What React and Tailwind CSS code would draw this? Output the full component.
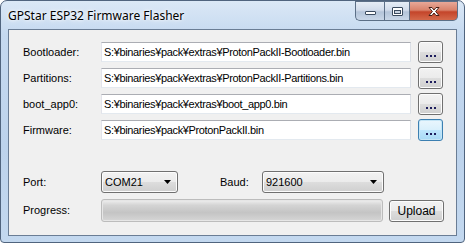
import { ChevronDown } from "lucide-react";

const font = { fontFamily: '"Liberation Sans", Arial, sans-serif' };

function Ellipsis({ focused }) {
  return (
    <button
      className={
        "w-[25px] h-[22px] rounded-[3px] border flex items-end justify-center pb-[5px] " +
        (focused
          ? "border-[#3c7fb1] bg-[linear-gradient(#eaf6fd_0%,#d9f0fc_50%,#bee6fd_50%,#a7d9f5_100%)] shadow-[inset_0_0_0_1px_#c4e5f6]"
          : "border-[#707070] bg-[linear-gradient(#f2f2f2_0%,#ebebeb_50%,#dddddd_50%,#cfcfcf_100%)] shadow-[inset_0_0_0_1px_#fcfcfc]")
      }
    >
      <span className="flex gap-[2px]">
        <i className="block w-[2px] h-[2px] bg-[#1c1c5c]" />
        <i className="block w-[2px] h-[2px] bg-[#1c1c5c]" />
        <i className="block w-[2px] h-[2px] bg-[#1c1c5c]" />
      </span>
    </button>
  );
}

function FileRow({ label, path, focused }) {
  return (
    <div className="flex items-center h-[22px]">
      <span className="w-[78px] text-[11px] text-black">{label}</span>
      <div className="w-[310px] h-[20px] border border-[#abadb3] border-t-[#abadb3] border-l-[#e2e3ea] border-r-[#dbdfe6] border-b-[#e3e9ef] bg-white flex items-center pl-[2px] text-[11px] tracking-[-0.35px] text-black">
        {path}
      </div>
      <div className="ml-[7px]">
        <Ellipsis focused={focused} />
      </div>
    </div>
  );
}

function Combo({ value, width }) {
  return (
    <div
      className={
        "h-[22px] rounded-[3px] border border-[#707070] bg-[linear-gradient(#f2f2f2_0%,#ebebeb_50%,#dddddd_50%,#cfcfcf_100%)] shadow-[inset_0_0_0_1px_#fcfcfc] flex items-center justify-between pl-[3px] pr-[6px] text-[11px] text-black " +
        width
      }
    >
      <span>{value}</span>
      <svg width="7" height="4" viewBox="0 0 7 4">
        <path d="M0 0h7L3.5 4z" fill="#000" />
      </svg>
    </div>
  );
}

function TitleButtons() {
  return (
    <div className="flex h-[20px] mr-[6px]">
      <div className="w-[29px] h-[20px] border border-[#5c6f87] border-r-0 rounded-bl-[5px] bg-[linear-gradient(#e6edf6_0%,#d2dceb_45%,#b4c4d9_55%,#c9d7e8_100%)] flex items-center justify-center">
        <div className="w-[11px] h-[4px] mt-[4px] bg-white border border-[#3a4a5e] rounded-[1px]" />
      </div>
      <div className="w-[26px] h-[20px] border border-[#5c6f87] bg-[linear-gradient(#e6edf6_0%,#d2dceb_45%,#b4c4d9_55%,#c9d7e8_100%)] flex items-center justify-center">
        <div className="w-[11px] h-[9px] border border-[#3a4a5e] rounded-[1px] bg-white flex items-center justify-center">
          <div className="w-[7px] h-[4px] mt-[1px] border border-[#3a4a5e] bg-[#c9d4e2]" />
        </div>
      </div>
      <div className="w-[48px] h-[20px] border border-[#5c6f87] border-l-0 rounded-br-[5px] bg-[linear-gradient(#e8a898_0%,#d9826b_45%,#c4452a_55%,#d4694b_100%)] flex items-center justify-center">
        <svg width="14" height="11" viewBox="0 0 14 11">
          <path
            d="M2 1.5h3L7 4l2-2.5h3L8.6 5.5 12 9.5H9L7 7 5 9.5H2l3.4-4z"
            fill="#fff"
            stroke="#4a1f16"
            strokeWidth="1"
            strokeLinejoin="round"
          />
        </svg>
      </div>
    </div>
  );
}

export default function App() {
  return (
    <div
      className="w-[465px] h-[243px] rounded-t-[7px] rounded-b-[4px] border border-[#50647e] bg-[linear-gradient(180deg,#dbe8f6_0%,#c5d9f0_14%,#bdd3ec_60%,#c3d8ef_100%)] flex flex-col overflow-hidden"
      style={font}
    >
      <div className="h-[28px] flex items-start justify-between">
        <span
          className="ml-[7px] mt-[6px] text-[12px] text-black"
          style={{ fontFamily: '"Noto Sans", "Open Sans", sans-serif', textShadow: "0 0 6px #fff, 0 0 3px #fff" }}
        >
          GPStar ESP32 Firmware Flasher
        </span>
        <TitleButtons />
      </div>
      <div className="mx-[7px] mb-[6px] flex-1 border border-[#6a7d95] bg-[#f0f0f0] pl-[14px] pt-[11px] flex flex-col">
        <div className="flex flex-col gap-[4px]">
          <FileRow label="Bootloader:" path="S:¥binaries¥pack¥extras¥ProtonPackII-Bootloader.bin" />
          <FileRow label="Partitions:" path="S:¥binaries¥pack¥extras¥ProtonPackII-Partitions.bin" />
          <FileRow label="boot_app0:" path="S:¥binaries¥pack¥extras¥boot_app0.bin" />
          <FileRow label="Firmware:" path="S:¥binaries¥pack¥ProtonPackII.bin" focused />
        </div>
        <div className="flex items-center h-[22px] mt-[30px]">
          <span className="w-[78px] text-[11px] text-black">Port:</span>
          <Combo value="COM21" width="w-[77px]" />
          <span className="ml-[42px] w-[42px] text-[11px] text-black">Baud:</span>
          <Combo value="921600" width="w-[122px]" />
        </div>
        <div className="flex items-center h-[23px] mt-[6px]">
          <span className="w-[78px] text-[11px] text-black">Progress:</span>
          <div className="w-[282px] h-[23px] rounded-[3px] border border-[#bcbcbc] bg-[linear-gradient(#f0f0f0_0%,#d4d4d4_25%,#c4c4c4_60%,#d6d6d6_100%)] shadow-[inset_0_0_0_1px_#e6e6e6]" />
          <button className="ml-[6px] w-[55px] h-[22px] rounded-[3px] border border-[#707070] bg-[linear-gradient(#f2f2f2_0%,#ebebeb_50%,#dddddd_50%,#cfcfcf_100%)] shadow-[inset_0_0_0_1px_#fcfcfc] text-[12px] text-black">
            Upload
          </button>
        </div>
      </div>
    </div>
  );
}
